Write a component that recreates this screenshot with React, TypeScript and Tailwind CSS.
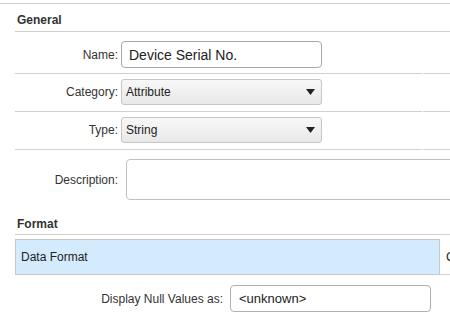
export default function App() {
  const Arrow = () => (
    <svg width="9" height="6" viewBox="0 0 9 6" className="mr-[6px]">
      <path d="M0 0H9L4.5 6Z" fill="#222" />
    </svg>
  );

  const selectBox = (value: string) => (
    <div className="ml-[3px] flex h-[26px] w-[201px] items-center justify-between rounded-[3px] border border-[#c6c6c6] bg-gradient-to-b from-[#f8f8f8] to-[#e8e8e8] pl-[4px] text-[12px] text-[#222]">
      <span>{value}</span>
      <Arrow />
    </div>
  );

  return (
    <div className="h-[324px] w-[450px] overflow-hidden bg-white font-['Liberation_Sans',Arial,sans-serif] text-[12px] leading-[14px] text-[#333]">
      <div className="mt-[3px] border-t border-[#d0d0d0]">
        <div className="pl-[15px]">
          {/* General */}
          <div className="h-[28px] border-b border-[#d0d0d0] pl-[2px] pt-[9px] font-bold text-[#333]">
            General
          </div>

          {/* Name */}
          <div className="flex">
            <div className="flex w-[407px] items-center border-b border-[#d0d0d0] pb-[5px] pt-[9px]">
              <div className="w-[103px] shrink-0 text-right">Name:</div>
              <div className="ml-[3px] flex h-[27px] w-[201px] items-center rounded-[4px] border border-[#a8a8a8] pl-[7px] text-[14px] text-[#222]">
                Device Serial No.
              </div>
            </div>
            <div className="ml-[1px] flex-1 border-b border-[#d0d0d0]" />
          </div>

          {/* Category */}
          <div className="flex">
            <div className="flex w-[407px] items-center border-b border-[#d0d0d0] pb-[6px] pt-[5px]">
              <div className="w-[103px] shrink-0 text-right">Category:</div>
              {selectBox('Attribute')}
            </div>
            <div className="ml-[1px] flex-1 border-b border-[#d0d0d0]" />
          </div>

          {/* Type */}
          <div className="flex">
            <div className="flex w-[407px] items-center border-b border-[#d0d0d0] pb-[6px] pt-[5px]">
              <div className="w-[103px] shrink-0 text-right">Type:</div>
              {selectBox('String')}
            </div>
            <div className="ml-[1px] flex-1 border-b border-[#d0d0d0]" />
          </div>

          {/* Description */}
          <div className="flex items-center pt-[9px]">
            <div className="w-[103px] shrink-0 text-right">Description:</div>
            <div className="ml-[8px] h-[41px] w-[400px] shrink-0 rounded-[4px] border border-[#c0c0c0]" />
          </div>

          {/* Format */}
          <div className="h-[35px] border-b border-[#d0d0d0] pl-[2px] pt-[17px] font-bold text-[#333]">
            Format
          </div>

          <div className="mt-[4px] flex">
            <div className="flex h-[36px] w-[425px] shrink-0 items-center border border-[#c8c8c8] bg-[#d3ebfc] pl-[5px] text-[#222]">
              Data Format
            </div>
            <div className="flex flex-1 items-center border-b border-[#d0d0d0] pl-[6px] text-[#222]">
              Co
            </div>
          </div>

          {/* Display Null */}
          <div className="mt-[10px] flex items-center">
            <div className="w-[208px] shrink-0 text-right">Display Null Values as:</div>
            <div className="ml-[7px] flex h-[27px] w-[201px] items-center rounded-[4px] border border-[#b0b0b0] pl-[8px] text-[13px] text-[#222]">
              &lt;unknown&gt;
            </div>
          </div>
        </div>
      </div>
    </div>
  );
}
